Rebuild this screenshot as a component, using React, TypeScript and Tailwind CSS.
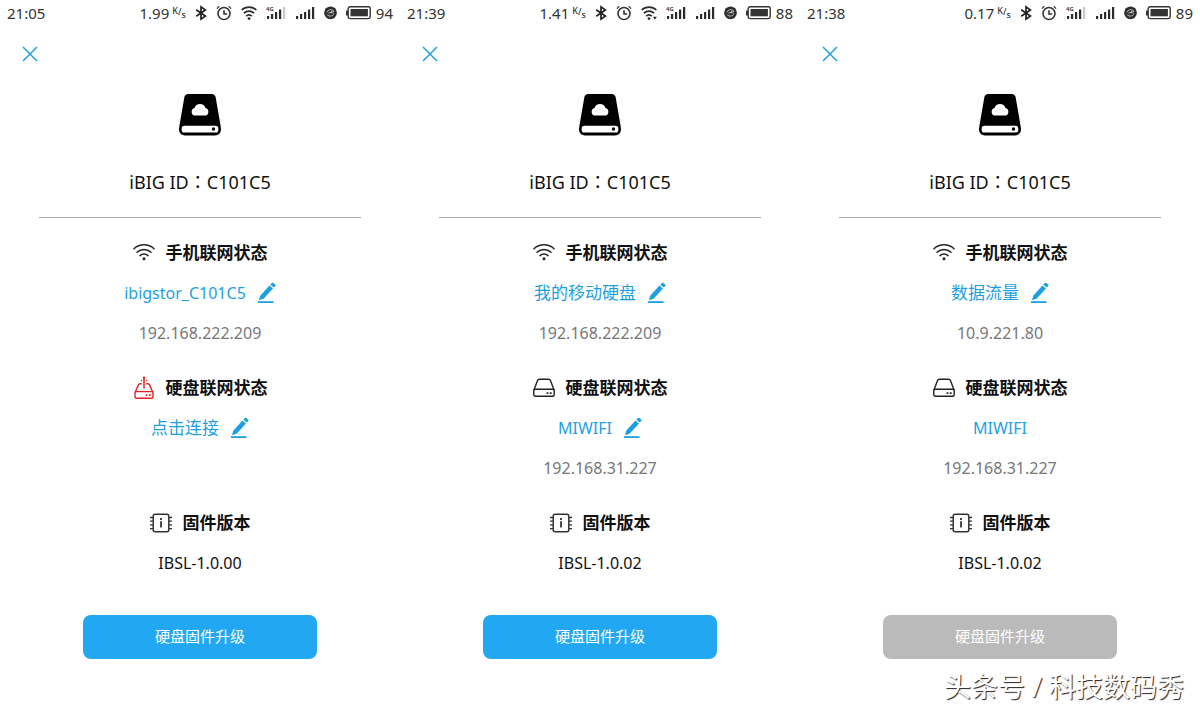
import type { ReactNode } from 'react';

type SignalBars = 3 | 4 | 5;

interface Screen {
  time: string;
  speed: string;
  battery: string;
  wifi: 'none' | 'plain' | 'active';
  mobileBars: SignalBars;
  network: string;
  phoneIp: string;
  diskOnline: boolean;
  diskNetwork: string;
  diskEditable: boolean;
  diskIp: string;
  firmware: string;
  canUpgrade: boolean;
}

const screens: Screen[] = [
  {
    time: '21:05',
    speed: '1.99',
    battery: '94',
    wifi: 'plain',
    mobileBars: 4,
    network: 'ibigstor_C101C5',
    phoneIp: '192.168.222.209',
    diskOnline: false,
    diskNetwork: '点击连接',
    diskEditable: true,
    diskIp: '',
    firmware: 'IBSL-1.0.00',
    canUpgrade: true,
  },
  {
    time: '21:39',
    speed: '1.41',
    battery: '88',
    wifi: 'active',
    mobileBars: 5,
    network: '我的移动硬盘',
    phoneIp: '192.168.222.209',
    diskOnline: true,
    diskNetwork: 'MIWIFI',
    diskEditable: true,
    diskIp: '192.168.31.227',
    firmware: 'IBSL-1.0.02',
    canUpgrade: true,
  },
  {
    time: '21:38',
    speed: '0.17',
    battery: '89',
    wifi: 'none',
    mobileBars: 4,
    network: '数据流量',
    phoneIp: '10.9.221.80',
    diskOnline: true,
    diskNetwork: 'MIWIFI',
    diskEditable: false,
    diskIp: '192.168.31.227',
    firmware: 'IBSL-1.0.02',
    canUpgrade: false,
  },
];

const BluetoothIcon = () => (
  <svg width="12" height="16" viewBox="0 0 12 16" fill="none" stroke="#222" strokeWidth="1.7">
    <path d="M1.2 4.8 10.4 11 6 14.2V1.8L10.4 5 1.2 11.2" />
  </svg>
);

const AlarmIcon = () => (
  <svg width="16" height="16" viewBox="0 0 16 16" fill="none" stroke="#333" strokeWidth="1.6">
    <circle cx="8" cy="8.5" r="6" />
    <path d="M8 5.2V9h3.2" />
    <path d="M.9 3.6 3.3 1.3M15.1 3.6l-2.4-2.3" strokeWidth="1.2" />
  </svg>
);

const StatusWifiIcon = ({ active }: { active: boolean }) => (
  <svg width="16" height="16" viewBox="0 0 16 16" fill="none" stroke="#2b2b2b" strokeWidth="1.7">
    <path d="M.6 5a10.8 10.8 0 0 1 14.8 0" />
    <path d="M2.9 8.1a7.5 7.5 0 0 1 10.2 0" />
    <path d="M5.2 11.1a4.1 4.1 0 0 1 5.6 0" />
    <circle cx="8" cy="13.6" r="1.4" fill="#2b2b2b" stroke="none" />
    {active && <path d="M11.9 11.8h4L13.9 14.8z" fill="#2b2b2b" stroke="none" />}
  </svg>
);

const SignalIcon = ({ bars, label }: { bars: SignalBars; label?: string }) => (
  <svg width="20" height="16" viewBox="0 0 20 16">
    {[3, 5, 7, 9.5, 12].map((height, i) => (
      <rect
        key={height}
        x={i * 4 + 1}
        y={14 - height}
        width="2.2"
        height={height}
        fill={i < bars ? '#2b2b2b' : '#c9c9c9'}
      />
    ))}
    {label && (
      <text x="0" y="6" fontSize="6" fontWeight="700" fill="#444" fontFamily="Noto Sans, sans-serif">
        {label}
      </text>
    )}
  </svg>
);

const BadgeIcon = () => (
  <svg width="13" height="16" viewBox="0 0 13 16" fill="none">
    <circle cx="6.5" cy="7.8" r="6.4" fill="#2f2f2f" />
    <path d="M3 7.2C4.2 4.2 8.4 4 9.9 6.3c-1.5-.6-3 .2-3.4 1.5M3.2 9.8c2 1.9 5 1.7 6.5-.5M4.4 8.1c1.5-.9 3.5-.5 5.2.2" stroke="#ccc" strokeWidth="1" />
  </svg>
);

const BatteryIcon = () => (
  <svg width="25" height="16" viewBox="0 0 25 16">
    <rect x="0" y="5.5" width="2" height="5" rx=".5" fill="#333" />
    <rect x="2.2" y="1.7" width="22" height="11.9" rx="2" fill="#fff" stroke="#333" strokeWidth="1.4" />
    <rect x="4.5" y="4" width="17.4" height="7.3" fill="#333" />
  </svg>
);

const CloseIcon = () => (
  <svg width="16" height="16" viewBox="0 0 16 16" stroke="#1e9fe0" strokeWidth="1.5">
    <path d="M1 1l14 14M15 1 1 15" />
  </svg>
);

const CloudDiskIcon = () => (
  <svg width="42" height="42" viewBox="0 0 42 42">
    <path d="M9.5 0h23c2.400 0 3.800 1.300 4.200 3.600l5 28.900c.2 1 .3 1.900.3 2.800 0 3.500-2.500 6.200-6 6.200H6c-3.500 0-6-2.700-6-6.200 0-.9.1-1.800.3-2.800l5-28.900C5.700 1.300 7.100 0 9.500 0z" />
    <rect x="2.6" y="31.8" width="36.8" height="6.8" rx="3.2" fill="#fff" />
    <circle cx="34.5" cy="35" r="1.7" />
    <path d="M16.3 21.600a3.800 3.800 0 0 1-.7-7.500c.6-2.400 2.500-4 5.400-4s4.800 1.600 5.400 4a3.800 3.800 0 0 1-.7 7.500z" fill="#fff" />
  </svg>
);

const WifiIcon = () => (
  <svg width="22" height="20" viewBox="0 0 22 20" fill="none" stroke="#222" strokeWidth="1.5" strokeLinecap="round">
    <path d="M1 5.700a14.600 14.600 0 0 1 20 0" />
    <path d="M4 9.200a10.200 10.200 0 0 1 14 0" />
    <path d="M7 12.600a5.800 5.800 0 0 1 8 0" />
    <circle cx="11" cy="15.800" r="1.500" fill="#222" stroke="none" />
  </svg>
);

const DiskIcon = () => (
  <svg width="22" height="22" viewBox="0 0 22 22" fill="none" stroke="#222" strokeWidth="1.4" strokeLinejoin="round">
    <path d="M.8 13.2 4.6 3.4c.3-.8.9-1.2 1.7-1.2h9.4c.8 0 1.4.4 1.7 1.2l3.8 9.8" />
    <rect x=".8" y="12.2" width="20.4" height="7" rx="1.5" />
    <path d="M13.6 16.2h1.800M16.800 16.200h1.800" strokeWidth="1.800" />
  </svg>
);

const DiskOfflineIcon = () => (
  <svg width="22" height="24" viewBox="0 0 22 24" fill="none" stroke="#e02424" strokeWidth="1.4" strokeLinejoin="round">
    <path d="M8.8 7.7H7c-.8 0-1.3.4-1.6 1.2l-3.2 7.4M13.2 7.7H15c.8 0 1.3.4 1.6 1.2l3.2 7.4" />
    <rect x="2" y="15.6" width="18" height="6.6" rx="1.5" />
    <path d="M11 2v10.500" strokeWidth="1.500" />
    <path d="M7.900 5.200 9 3.900M14.100 5.200 13 3.900" strokeWidth="1.100" />
    <circle cx="11" cy="1.7" r="1.2" fill="#e02424" stroke="none" />
    <path d="M12.800 19.200h1.700M16 19.200h1.700" strokeWidth="1.800" />
  </svg>
);

const ChipIcon = () => (
  <svg width="22" height="20" viewBox="0 0 22 20" fill="none" stroke="#333" strokeWidth="1.5">
    <rect x="3.2" y="1.2" width="15.6" height="17.6" rx="2" />
    <path d="M0 4.500h3M0 8.200h3M0 11.900h3M0 15.600h3M19 4.500h3M19 8.200h3M19 11.900h3M19 15.600h3" strokeWidth="1.3" />
    <path d="M11 8.200v6.200M11 5v2" strokeWidth="1.8" />
  </svg>
);

const PencilIcon = () => (
  <svg width="18" height="22" viewBox="0 0 18 22" fill="#1e9fe0">
    <path d="M11.4 3.6 15 6.5 5.6 16.8 1 18.3 2.2 13.8z" />
    <path d="M12.3 2.7 13.9 1c.4-.4 1-.4 1.4-.1l1.9 1.5c.5.4.5 1 .1 1.5l-1.5 1.7z" />
    <rect x="0" y="19.2" width="15.5" height="1.8" />
  </svg>
);

const StatusBar = ({ screen }: { screen: Screen }) => (
  <header className="flex h-[26px] items-center justify-between px-[7px] text-[15px] leading-5 text-[#333]">
    <span>{screen.time}</span>
    <div className="flex items-center gap-[9px]">
      <span className="flex items-center gap-[3px]">
        {screen.speed}
        <span className="flex text-[9px] leading-3 font-medium">
          <span className="pb-1">K</span>
          <span className="pt-px">/</span>
          <span className="pt-1">s</span>
        </span>
      </span>
      <BluetoothIcon />
      <AlarmIcon />
      {screen.wifi !== 'none' && <StatusWifiIcon active={screen.wifi === 'active'} />}
      <SignalIcon bars={screen.mobileBars} label="4G" />
      <SignalIcon bars={5} />
      <BadgeIcon />
      <span className="flex items-center gap-[5px]">
        <BatteryIcon />
        {screen.battery}
      </span>
    </div>
  </header>
);

const SectionTitle = ({ icon, children }: { icon: ReactNode; children: ReactNode }) => (
  <h2 className="flex h-[42px] items-center justify-center gap-[11px] text-[17px] font-bold">
    {icon}
    {children}
  </h2>
);

const NetworkName = ({ name, editable }: { name: string; editable: boolean }) => (
  <div className="flex h-[37px] items-center justify-center gap-3 text-[#1e9fe0]">
    <a href="#" className={/^[\w-]+$/.test(name) ? 'text-base' : 'text-[17px]'}>
      {name}
    </a>
    {editable && (
      <button type="button" aria-label="编辑">
        <PencilIcon />
      </button>
    )}
  </div>
);

const IpAddress = ({ ip }: { ip: string }) => (
  <p className="flex h-11 items-center justify-center text-base text-[#777]">{ip}</p>
);

const DeviceScreen = ({ screen }: { screen: Screen }) => (
  <section className="flex flex-col">
    <StatusBar screen={screen} />
    <div className="flex h-14 items-center px-[22px]">
      <button type="button" aria-label="关闭">
        <CloseIcon />
      </button>
    </div>
    <div className="flex justify-center pt-3">
      <CloudDiskIcon />
    </div>
    <h1 className="mt-[29px] h-8 text-center text-lg leading-8">
      iBIG ID<span className="font-['Noto_Sans_CJK_TC',sans-serif]" lang="zh-TW">：</span>C101C5
    </h1>
    <hr className="mx-[39px] mt-5 border-[#aaa]" />

    <div className="mt-[14px] flex flex-col gap-3">
      <div>
        <SectionTitle icon={<WifiIcon />}>手机联网状态</SectionTitle>
        <NetworkName name={screen.network} editable />
        <IpAddress ip={screen.phoneIp} />
      </div>
      <div>
        <SectionTitle icon={screen.diskOnline ? <DiskIcon /> : <DiskOfflineIcon />}>硬盘联网状态</SectionTitle>
        <NetworkName name={screen.diskNetwork} editable={screen.diskEditable} />
        <IpAddress ip={screen.diskIp} />
      </div>
      <div>
        <SectionTitle icon={<ChipIcon />}>固件版本</SectionTitle>
        <p className="flex h-[37px] items-center justify-center text-base">{screen.firmware}</p>
      </div>
    </div>

    <button
      type="button"
      disabled={!screen.canUpgrade}
      className="mx-auto mt-[34px] h-11 w-[234px] rounded-lg bg-[#22a8f2] pb-0.5 text-[15px] text-white disabled:bg-[#bababa]"
    >
      硬盘固件升级
    </button>
  </section>
);

const App = () => (
  <main className="relative min-h-screen bg-white font-['Noto_Sans','Noto_Sans_CJK_SC',sans-serif] text-[#111]">
    <div className="grid grid-cols-3">
      {screens.map((screen) => (
        <DeviceScreen key={screen.time} screen={screen} />
      ))}
    </div>
    <p className="absolute right-4 bottom-1 text-[27px] leading-10 text-white [text-shadow:1px_1px_1px_#222]">
      头条号 / 科技数码秀
    </p>
  </main>
);

export default App;
